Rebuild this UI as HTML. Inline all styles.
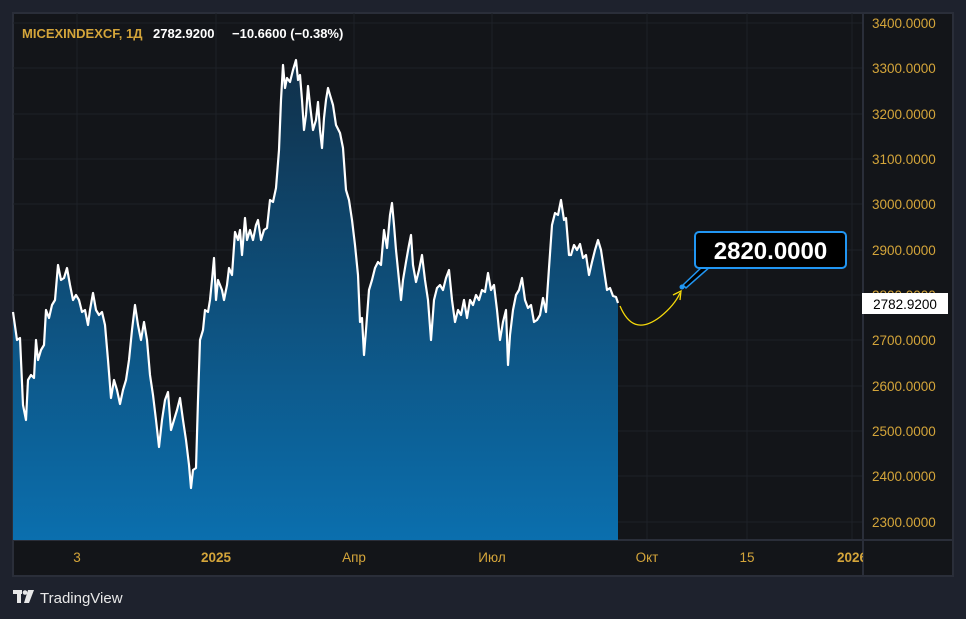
<!DOCTYPE html>
<html><head><meta charset="utf-8"><style>
html,body{margin:0;padding:0;background:#1e222d;width:966px;height:619px;overflow:hidden;font-family:"Liberation Sans","DejaVu Sans",sans-serif}
</style></head><body>
<svg width="966" height="619" xmlns="http://www.w3.org/2000/svg" style="position:absolute;left:0;top:0">
<defs><linearGradient id="g" x1="0" y1="0" x2="0" y2="1">
<stop offset="0" stop-color="#113049"/><stop offset="1" stop-color="#0b6fae"/></linearGradient></defs>
<rect x="13" y="13" width="940" height="563" fill="#131519" stroke="#2a2e39" stroke-width="2"/>
<g stroke="#1e2128" stroke-width="1">
<line x1="13" x2="863" y1="23" y2="23"/><line x1="13" x2="863" y1="68" y2="68"/><line x1="13" x2="863" y1="114" y2="114"/><line x1="13" x2="863" y1="159" y2="159"/><line x1="13" x2="863" y1="204" y2="204"/><line x1="13" x2="863" y1="250" y2="250"/><line x1="13" x2="863" y1="295" y2="295"/><line x1="13" x2="863" y1="340" y2="340"/><line x1="13" x2="863" y1="386" y2="386"/><line x1="13" x2="863" y1="431" y2="431"/><line x1="13" x2="863" y1="476" y2="476"/><line x1="13" x2="863" y1="522" y2="522"/>
<line x1="77" x2="77" y1="13" y2="540"/><line x1="216" x2="216" y1="13" y2="540"/><line x1="354" x2="354" y1="13" y2="540"/><line x1="492" x2="492" y1="13" y2="540"/><line x1="647" x2="647" y1="13" y2="540"/><line x1="747" x2="747" y1="13" y2="540"/><line x1="852" x2="852" y1="13" y2="540"/>
</g>
<line x1="863" x2="863" y1="13" y2="576" stroke="#2a2e39" stroke-width="2"/>
<line x1="13" x2="953" y1="540" y2="540" stroke="#2a2e39" stroke-width="2"/>
<polygon fill="url(#g)" points="13,540 13,312 17,340 20,338 23,405 26,420 28,380 31,375 34,378 36,340 38,360 41,350 44,345 46,310 49,318 52,305 55,300 58,265 61,280 64,278 67,268 70,285 73,300 76,295 79,300 82,312 85,310 88,325 90,310 93,293 96,310 99,315 102,312 105,325 108,360 111,398 114,380 117,390 120,404 123,390 126,380 129,360 132,330 135,305 138,325 141,340 144,322 147,340 150,375 153,395 156,420 159,447 162,420 165,400 168,392 171,430 174,420 177,410 180,398 183,420 186,440 189,465 191,488 193,470 196,468 198,400 200,340 203,330 205,310 208,312 210,300 212,280 214,258 216,300 218,280 220,285 222,290 224,300 227,285 229,268 232,275 235,232 238,240 240,230 242,255 245,218 247,240 250,230 253,240 256,225 258,220 261,240 264,230 267,228 270,200 273,202 276,188 279,150 281,100 283,65 285,88 287,78 290,82 293,70 296,60 298,80 300,75 302,100 304,130 306,115 308,86 310,105 313,130 316,120 318,102 320,130 322,148 324,118 326,100 328,88 330,95 333,105 336,125 340,133 343,148 346,190 349,200 352,220 355,245 358,275 360,322 362,318 364,355 366,330 369,290 372,280 375,268 378,262 381,265 384,230 387,248 390,215 392,203 394,225 396,250 398,270 401,300 403,280 406,262 409,245 411,235 413,265 416,282 419,270 422,255 425,280 428,300 431,340 434,300 437,288 440,285 443,290 446,278 449,270 452,300 455,322 458,310 461,315 464,300 467,318 470,300 473,305 476,295 479,300 482,290 485,292 488,273 491,290 494,285 497,310 500,340 503,322 506,310 508,365 510,335 513,310 516,295 519,290 522,278 525,300 528,308 531,305 534,322 537,320 540,315 543,298 546,312 549,268 552,225 555,213 558,215 561,200 564,220 566,218 569,255 571,255 574,245 577,250 580,244 583,258 586,255 589,275 592,262 595,250 598,240 601,250 604,270 607,290 610,288 613,296 616,297 618,303 618,540"/>
<polyline fill="none" stroke="#fff" stroke-width="2.2" stroke-linejoin="round" points="13,312 17,340 20,338 23,405 26,420 28,380 31,375 34,378 36,340 38,360 41,350 44,345 46,310 49,318 52,305 55,300 58,265 61,280 64,278 67,268 70,285 73,300 76,295 79,300 82,312 85,310 88,325 90,310 93,293 96,310 99,315 102,312 105,325 108,360 111,398 114,380 117,390 120,404 123,390 126,380 129,360 132,330 135,305 138,325 141,340 144,322 147,340 150,375 153,395 156,420 159,447 162,420 165,400 168,392 171,430 174,420 177,410 180,398 183,420 186,440 189,465 191,488 193,470 196,468 198,400 200,340 203,330 205,310 208,312 210,300 212,280 214,258 216,300 218,280 220,285 222,290 224,300 227,285 229,268 232,275 235,232 238,240 240,230 242,255 245,218 247,240 250,230 253,240 256,225 258,220 261,240 264,230 267,228 270,200 273,202 276,188 279,150 281,100 283,65 285,88 287,78 290,82 293,70 296,60 298,80 300,75 302,100 304,130 306,115 308,86 310,105 313,130 316,120 318,102 320,130 322,148 324,118 326,100 328,88 330,95 333,105 336,125 340,133 343,148 346,190 349,200 352,220 355,245 358,275 360,322 362,318 364,355 366,330 369,290 372,280 375,268 378,262 381,265 384,230 387,248 390,215 392,203 394,225 396,250 398,270 401,300 403,280 406,262 409,245 411,235 413,265 416,282 419,270 422,255 425,280 428,300 431,340 434,300 437,288 440,285 443,290 446,278 449,270 452,300 455,322 458,310 461,315 464,300 467,318 470,300 473,305 476,295 479,300 482,290 485,292 488,273 491,290 494,285 497,310 500,340 503,322 506,310 508,365 510,335 513,310 516,295 519,290 522,278 525,300 528,308 531,305 534,322 537,320 540,315 543,298 546,312 549,268 552,225 555,213 558,215 561,200 564,220 566,218 569,255 571,255 574,245 577,250 580,244 583,258 586,255 589,275 592,262 595,250 598,240 601,250 604,270 607,290 610,288 613,296 616,297 618,303"/>
<path d="M620,306 C628,325 640,332 660,317 C670,309 676,302 680,293" fill="none" stroke="#f5d90a" stroke-width="1.3"/>
<path d="M673,295 L681,291 L680,300" fill="none" stroke="#f5d90a" stroke-width="1.3"/>
<path d="M683,285 L703,266 L711,266 L686,288 Z" fill="#000" stroke="#2196f3" stroke-width="1.5"/>
<circle cx="682" cy="287" r="2.5" fill="#2196f3"/>
<rect x="695" y="232" width="151" height="36" rx="4" fill="#000" stroke="#2196f3" stroke-width="2"/>
<text x="770.5" y="259" text-anchor="middle" fill="#fff" font-size="24" font-weight="bold">2820.0000</text>
<g fill="#d4a53a" font-size="13.5" text-anchor="start">
<text x="872" y="28">3400.0000</text><text x="872" y="73">3300.0000</text><text x="872" y="119">3200.0000</text><text x="872" y="164">3100.0000</text><text x="872" y="209">3000.0000</text><text x="872" y="255">2900.0000</text><text x="872" y="300">2800.0000</text><text x="872" y="345">2700.0000</text><text x="872" y="391">2600.0000</text><text x="872" y="436">2500.0000</text><text x="872" y="481">2400.0000</text><text x="872" y="527">2300.0000</text>
</g>
<rect x="862" y="293" width="86" height="21" fill="#fff"/>
<text x="905" y="309" text-anchor="middle" fill="#000" font-size="13.5">2782.9200</text>
<svg x="13" y="541" width="850" height="34"><g fill="#d4a53a" font-size="13.5" text-anchor="middle">
<text x="64" y="21">3</text><text x="203" y="21" font-weight="bold">2025</text><text x="341" y="21">Апр</text><text x="479" y="21">Июл</text><text x="634" y="21">Окт</text><text x="734" y="21">15</text><text x="839" y="21" font-weight="bold">2026</text></g></svg>
<text x="22" y="38" font-size="13" fill="#d4a53a" font-weight="bold">MICEXINDEXCF, 1Д</text>
<text x="153" y="38" font-size="13" fill="#fff" font-weight="bold">2782.9200</text>
<text x="232" y="38" font-size="13" fill="#fff" font-weight="bold">−10.6600 (−0.38%)</text>
<g fill="#e8e8e8"><rect x="13" y="590" width="9" height="4"/><rect x="17" y="590" width="4" height="13"/><circle cx="25" cy="592.5" r="2.3"/><path d="M28,590 L34,590 L29,603 L24,603 Z"/></g>
<text x="40" y="603" font-size="15" fill="#e8e8e8">TradingView</text>
</svg>
</body></html>
